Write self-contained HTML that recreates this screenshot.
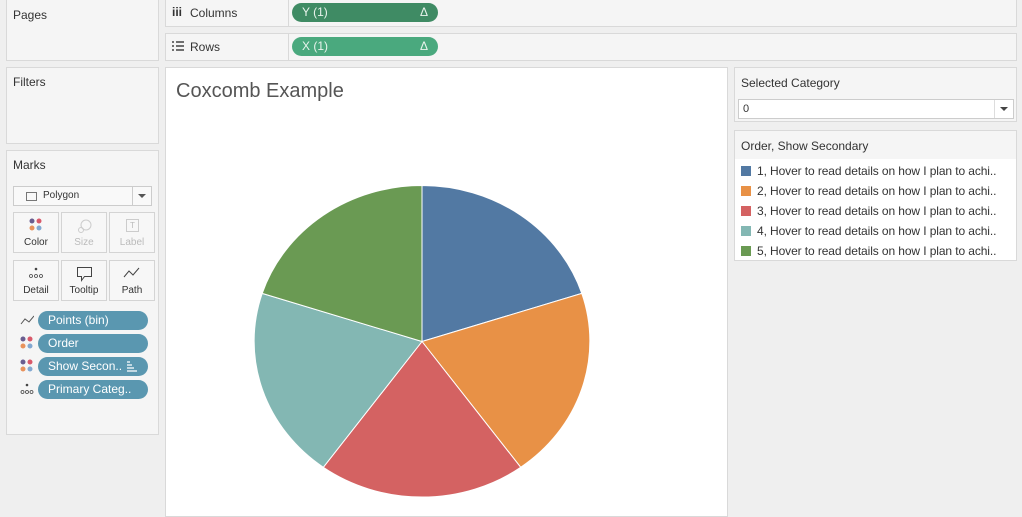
<!DOCTYPE html>
<html><head><style>
body{margin:0;width:1022px;height:514px;background:#efefef;font-family:"Liberation Sans",sans-serif;position:relative;overflow:hidden;color:#333}
.p{position:absolute;background:#f5f5f5;border:1px solid #d9d9d9;box-sizing:border-box}
.t{position:absolute;font-size:12px;color:#333}
.card{position:absolute;width:46px;height:41px;border:1px solid #d4d4d4;background:#f7f7f7;box-sizing:border-box;font-size:10px;text-align:center}
.card span{position:absolute;left:0;right:0;bottom:4px}
.pill{position:absolute;left:38px;width:110px;height:19px;border-radius:10px;background:#5a97b0;color:#fff;font-size:12px;line-height:19px;padding-left:10px;box-sizing:border-box}
.dots{position:absolute;left:20px;width:14px;height:14px}
.lg{position:absolute;left:741px;font-size:12px;color:#333;letter-spacing:-0.1px}
.lg i{display:inline-block;width:10px;height:10px;margin-right:6px;vertical-align:-1px}
</style></head><body>
<div class="p" style="left:6px;top:-1px;width:153px;height:62px"></div><div class="t" style="left:13px;top:8px">Pages</div>
<div class="p" style="left:6px;top:67px;width:153px;height:77px"></div><div class="t" style="left:13px;top:75px">Filters</div>
<div class="p" style="left:6px;top:150px;width:153px;height:285px"></div><div class="t" style="left:13px;top:158px">Marks</div>
<div style="position:absolute;left:13px;top:186px;width:139px;height:20px;border:1px solid #ccc;background:#f9f9f9;box-sizing:border-box;font-size:10px;line-height:18px;padding-left:29px">Polygon<div style="position:absolute;left:12px;top:5px;width:9px;height:7px;border:1px solid #777"></div><div style="position:absolute;right:0;top:0;width:18px;height:18px;border-left:1px solid #ccc"><div style="position:absolute;left:5px;top:7px;border:4px solid transparent;border-top:4px solid #555;border-bottom:0"></div></div></div>
<div class="card" style="left:13px;top:212px"><svg style="position:absolute;left:15px;top:5px" width="14" height="14"><circle cx="3" cy="3" r="2.5" fill="#6a5d8f"/><circle cx="10" cy="3" r="2.5" fill="#d9596a"/><circle cx="3" cy="10" r="2.5" fill="#e8925c"/><circle cx="10" cy="10" r="2.5" fill="#82a8d1"/></svg><span>Color</span></div>
<div class="card" style="left:61px;top:212px;color:#bbb"><svg style="position:absolute;left:15px;top:5px" width="16" height="16"><circle cx="9" cy="7" r="5" fill="none" stroke="#ccc"/><circle cx="4" cy="12" r="2.5" fill="none" stroke="#ccc"/></svg><span>Size</span></div>
<div class="card" style="left:109px;top:212px;color:#bbb"><div style="position:absolute;left:16px;top:6px;width:11px;height:11px;border:1px solid #ccc;font-size:8px;line-height:11px">T</div><span>Label</span></div>
<div class="card" style="left:13px;top:260px"><svg style="position:absolute;left:14px;top:6px" width="16" height="12"><circle cx="8" cy="2" r="1.3" fill="#444"/><circle cx="3" cy="9" r="1.5" fill="none" stroke="#444" stroke-width=".8"/><circle cx="8" cy="9" r="1.5" fill="none" stroke="#444" stroke-width=".8"/><circle cx="13" cy="9" r="1.5" fill="none" stroke="#444" stroke-width=".8"/></svg><span>Detail</span></div>
<div class="card" style="left:61px;top:260px"><svg style="position:absolute;left:14px;top:5px" width="18" height="16"><path d="M1.5 1.5h14v9h-7l-3 4v-4h-4z" fill="none" stroke="#444"/></svg><span>Tooltip</span></div>
<div class="card" style="left:109px;top:260px"><svg style="position:absolute;left:13px;top:6px" width="18" height="12"><path d="M1 10l5-6 4 4 6-7" fill="none" stroke="#444"/></svg><span>Path</span></div>
<svg class="dots" style="top:314px" width="14" height="12"><path d="M1 10l4-5 4 3 5-6" fill="none" stroke="#555"/></svg><div class="pill" style="top:311px">Points (bin)</div>
<svg class="dots" style="top:336px"><circle cx="3" cy="3" r="2.5" fill="#6a5d8f"/><circle cx="10" cy="3" r="2.5" fill="#d9596a"/><circle cx="3" cy="10" r="2.5" fill="#e8925c"/><circle cx="10" cy="10" r="2.5" fill="#82a8d1"/></svg><div class="pill" style="top:334px">Order</div>
<svg class="dots" style="top:359px"><circle cx="3" cy="3" r="2.5" fill="#6a5d8f"/><circle cx="10" cy="3" r="2.5" fill="#d9596a"/><circle cx="3" cy="10" r="2.5" fill="#e8925c"/><circle cx="10" cy="10" r="2.5" fill="#82a8d1"/></svg><div class="pill" style="top:357px">Show Secon..<svg style="position:absolute;right:10px;top:4px" width="12" height="11"><path d="M1 1h3M1 4h5M1 7h7M1 10h10" stroke="#fff" stroke-width="1.3"/></svg></div>
<svg class="dots" style="top:382px"><circle cx="7" cy="3" r="1.3" fill="#444"/><circle cx="2.5" cy="10" r="1.5" fill="none" stroke="#444" stroke-width=".8"/><circle cx="7" cy="10" r="1.5" fill="none" stroke="#444" stroke-width=".8"/><circle cx="11.5" cy="10" r="1.5" fill="none" stroke="#444" stroke-width=".8"/></svg><div class="pill" style="top:380px">Primary Categ..</div>

<div class="p" style="left:165px;top:-1px;width:852px;height:28px"></div>
<div style="position:absolute;left:288px;top:0;width:1px;height:26px;background:#d9d9d9"></div>
<div class="t" style="left:172px;top:5px;font-weight:bold;font-size:12px">iii</div><div class="t" style="left:190px;top:6px">Columns</div>
<div style="position:absolute;left:292px;top:3px;width:146px;height:19px;border-radius:10px;background:#3f8b64;color:#e8f3ec;font-size:12px;line-height:19px;padding-left:10px;box-sizing:border-box">Y (1)<span style="position:absolute;right:10px">&Delta;</span></div>
<div class="p" style="left:165px;top:33px;width:852px;height:28px"></div>
<div style="position:absolute;left:288px;top:34px;width:1px;height:26px;background:#d9d9d9"></div>
<svg style="position:absolute;left:172px;top:41px" width="12" height="10"><path d="M0 1h2M4 1h8M0 5h2M4 5h8M0 9h2M4 9h8" stroke="#444" stroke-width="1.4"/></svg><div class="t" style="left:190px;top:40px">Rows</div>
<div style="position:absolute;left:292px;top:37px;width:146px;height:19px;border-radius:10px;background:#4aa97e;color:#e8f3ec;font-size:12px;line-height:19px;padding-left:10px;box-sizing:border-box">X (1)<span style="position:absolute;right:10px">&Delta;</span></div>

<div style="position:absolute;left:165px;top:67px;width:563px;height:450px;background:#fff;border:1px solid #d9d9d9;box-sizing:border-box"></div>
<div style="position:absolute;left:176px;top:80px;font-size:20px;color:#555">Coxcomb Example</div>
<svg style="position:absolute;left:0;top:0" width="1022" height="514">
<g stroke="#fff" stroke-width="1">
<path d="M422 341.5L422 185.5A168 156 0 0 1 581.8 293.4Z" fill="#5279a3"/>
<path d="M422 341.5L581.8 293.4A168 156 0 0 1 520.7 467.3Z" fill="#e89146"/>
<path d="M422 341.5L520.7 467.3A168 156 0 0 1 323.3 467.3Z" fill="#d46262"/>
<path d="M422 341.5L323.3 467.3A168 156 0 0 1 262.2 293.4Z" fill="#83b7b3"/>
<path d="M422 341.5L262.2 293.4A168 156 0 0 1 422 185.5Z" fill="#6a9a53"/>
</g></svg>

<div class="p" style="left:734px;top:67px;width:283px;height:55px"></div>
<div class="t" style="left:741px;top:76px">Selected Category</div>
<div style="position:absolute;left:738px;top:99px;width:276px;height:20px;background:#fff;border:1px solid #ccc;box-sizing:border-box;font-size:11px;line-height:18px;padding-left:4px">0<div style="position:absolute;right:0;top:0;width:18px;height:18px;border-left:1px solid #ddd"><div style="position:absolute;left:5px;top:7px;border:4px solid transparent;border-top:4px solid #444;border-bottom:0"></div></div></div>
<div class="p" style="left:734px;top:130px;width:283px;height:131px;background:#fff"></div>
<div style="position:absolute;left:735px;top:131px;width:281px;height:28px;background:#f5f5f5"></div>
<div class="t" style="left:741px;top:139px">Order, Show Secondary</div>
<div class="lg" style="top:164px"><i style="background:#5279a3"></i>1, Hover to read details on how I plan to achi..</div>
<div class="lg" style="top:184px"><i style="background:#e89146"></i>2, Hover to read details on how I plan to achi..</div>
<div class="lg" style="top:204px"><i style="background:#d46262"></i>3, Hover to read details on how I plan to achi..</div>
<div class="lg" style="top:224px"><i style="background:#83b7b3"></i>4, Hover to read details on how I plan to achi..</div>
<div class="lg" style="top:244px"><i style="background:#6a9a53"></i>5, Hover to read details on how I plan to achi..</div>
</body></html>
